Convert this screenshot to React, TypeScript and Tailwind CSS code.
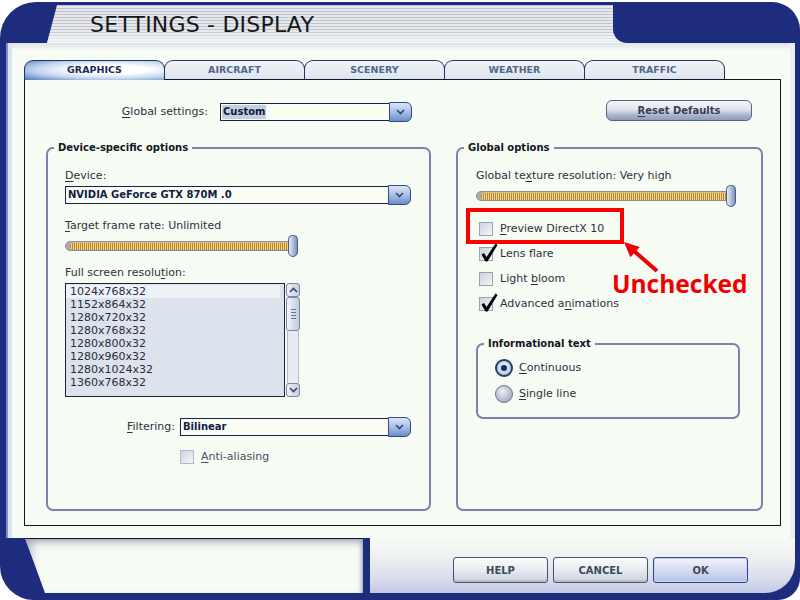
import React from "react";

const REG = "font-['DejaVu_Sans',Verdana,sans-serif]";
const BOLD = "font-['DejaVu_Sans',Verdana,sans-serif] font-bold";

function U({ children }: { children: React.ReactNode }) {
  return <span className="underline underline-offset-[2px] decoration-[1px]">{children}</span>;
}

function Chevron({ down = true }: { down?: boolean }) {
  return (
    <svg width="9" height="6" viewBox="0 0 9 6">
      <path d={down ? "M1 1L4.5 4.5L8 1" : "M1 5L4.5 1.5L8 5"} fill="none" stroke="#2f467c" strokeWidth="1.6" />
    </svg>
  );
}

function Select({ value, className, highlight }: { value: string; className: string; highlight?: boolean }) {
  return (
    <div className={`flex h-[18px] ${className}`}>
      <div className="flex-1 flex items-center border border-[#16224a] bg-[#fbfdf2] pl-[1px] overflow-hidden">
        <span className={`${BOLD} text-[10px] leading-[14px] text-[#0e1c48] px-[1px] ${highlight ? "bg-[#c5cfdd]" : ""}`}>{value}</span>
      </div>
      <div className="w-[23px] h-[20px] -mt-[1px] -ml-[1px] shrink-0 rounded-r-[6px] border border-[#34488a] bg-[linear-gradient(180deg,#dbe6f6_0%,#a8bfe6_50%,#6d8dca_100%)] flex items-center justify-center">
        <Chevron />
      </div>
    </div>
  );
}

function Slider({ className }: { className: string }) {
  return (
    <div className={`flex items-center h-[22px] ${className}`}>
      <div className="flex-1 h-[10px] rounded-l-full border border-[#8c8c92] bg-[repeating-linear-gradient(90deg,#b8852a_0px,#b8852a_1px,#f0d68e_1px,#f0d68e_2px)] shadow-[inset_4px_0_0_#a9aeb8,inset_0_1px_0_#d8c080]" />
      <div className="w-[10px] h-[22px] -ml-[2px] shrink-0 rounded-t-[5px] rounded-b-[6px] border border-[#4c5c84] bg-[linear-gradient(90deg,#e4ecf6,#a8b8d4_60%,#7c8eb4)]" />
    </div>
  );
}

function Check({ checked, dim }: { checked?: boolean; dim?: boolean }) {
  return (
    <span
      className={`relative inline-block w-[14px] h-[14px] shrink-0 border ${
        dim ? "border-[#b4bac6]" : "border-[#9aa3b5]"
      } bg-[linear-gradient(135deg,#cdd3de,#f3f5f8)]`}
    >
      {checked && (
        <svg className="absolute left-[0px] top-[-6px]" width="18" height="21" viewBox="0 0 18 21">
          <polygon points="1.5,12.5 4,11 6.5,15 15.5,1.5 17.5,3 7.5,19.5 5.5,19.5" fill="#000" />
        </svg>
      )}
    </span>
  );
}

function CheckRow({ checked, children }: { checked?: boolean; children: React.ReactNode }) {
  return (
    <div className="flex items-center h-[16px] gap-[7px]">
      <Check checked={checked} />
      <span className={`${REG} text-[11px] leading-[14px] text-[#30303c]`}>{children}</span>
    </div>
  );
}

function Radio({ on, children }: { on?: boolean; children: React.ReactNode }) {
  return (
    <div className="flex items-center h-[18px] gap-[6px]">
      {on ? (
        <span className="w-[18px] h-[18px] rounded-full border-2 border-[#2a3a66] bg-[radial-gradient(circle_at_50%_40%,#eef4fb,#9cc0e4)] flex items-center justify-center">
          <span className="w-[6px] h-[6px] rounded-full bg-[#1a2a50]" />
        </span>
      ) : (
        <span className="w-[18px] h-[18px] rounded-full border border-[#6c7890] bg-[radial-gradient(circle_at_40%_35%,#eef1f6,#8a98b4)]" />
      )}
      <span className={`${REG} text-[11px] leading-[14px] text-[#30303c]`}>{children}</span>
    </div>
  );
}

function Label({ children, className = "" }: { children: React.ReactNode; className?: string }) {
  return <div className={`${REG} text-[11px] leading-[14px] h-[14px] text-[#30303c] ${className}`}>{children}</div>;
}

function Legend({ children }: { children: React.ReactNode }) {
  return <legend className={`${BOLD} ml-[6px] px-[4px] text-[10px] leading-[14px] text-[#14161e]`}>{children}</legend>;
}

function Tab({ label, active }: { label: string; active?: boolean }) {
  return active ? (
    <div className={`w-[141px] h-[20px] rounded-t-[9px] border border-b-0 border-[#243458] bg-[radial-gradient(ellipse_at_62%_45%,#ffffff_30%,#c4d6ee_62%,#4a78c0_100%)] flex items-center justify-center ${BOLD} text-[9.5px] text-[#1c2a52]`}>
      {label}
    </div>
  ) : (
    <div className={`w-[141px] h-[19px] -ml-[1px] rounded-t-[9px] border border-b-0 border-[#243458] bg-[linear-gradient(180deg,#f2f5f8,#dce4ee)] flex items-center justify-center ${BOLD} text-[9.5px] text-[#50688a]`}>
      {label}
    </div>
  );
}

function Scrollbar() {
  return (
    <div className="w-[14px] h-[114px] ml-[1px] flex flex-col">
      <div className="h-[14px] rounded-[3px] border border-[#7a88a8] bg-[linear-gradient(90deg,#eef2f8,#c4cedf)] flex items-center justify-center">
        <Chevron down={false} />
      </div>
      <div className="h-[34px] rounded-[3px] border border-[#7a88a8] bg-[linear-gradient(90deg,#f2f5fa,#c0cadc)] flex flex-col items-center justify-center gap-[2px]">
        <div className="w-[5px] h-[1px] bg-[#6a7894]" />
        <div className="w-[5px] h-[1px] bg-[#6a7894]" />
        <div className="w-[5px] h-[1px] bg-[#6a7894]" />
        <div className="w-[5px] h-[1px] bg-[#6a7894]" />
      </div>
      <div className="flex-1 mx-[1px] border-x border-[#b4bccc] bg-[#e8ecf2]" />
      <div className="h-[14px] rounded-[3px] border border-[#7a88a8] bg-[linear-gradient(90deg,#eef2f8,#c4cedf)] flex items-center justify-center">
        <Chevron />
      </div>
    </div>
  );
}

function BottomButton({ label, primary }: { label: string; primary?: boolean }) {
  return (
    <div
      className={`w-[95px] h-[26px] rounded-[3px] border flex items-center justify-center ${BOLD} text-[10px] text-[#3c4a5c] ${
        primary
          ? "border-[#33438c] bg-[linear-gradient(180deg,#f2f5fc,#d6ddf2_50%,#b4c0e6)] shadow-[inset_0_0_0_1px_#c8d2f0]"
          : "border-[#4a5468] bg-[linear-gradient(180deg,#fbfcfc,#e8ecf0_50%,#c8d0dc)] shadow-[inset_0_-2px_0_#b8c0cc]"
      }`}
    >
      {label}
    </div>
  );
}

const RES = [
  "1024x768x32",
  "1152x864x32",
  "1280x720x32",
  "1280x768x32",
  "1280x800x32",
  "1280x960x32",
  "1280x1024x32",
  "1360x768x32",
];

export default function App() {
  return (
    <div className="relative w-[800px] h-[600px] bg-white overflow-hidden">
      <div className="mt-[2px] w-[800px] h-[598px] bg-[#1e2c7e] rounded-tl-[36px] rounded-tr-[28px] rounded-bl-[34px] rounded-br-[22px] flex flex-col overflow-hidden">
        {/* Title bar */}
        <div className="flex h-[41px] pt-[3px] shrink-0">
          <div className="w-[47px] shrink-0" />
          <div className="flex-1 mr-[5px] flex [clip-path:polygon(10px_0,100%_0,100%_100%,0_100%)] bg-[linear-gradient(180deg,rgba(255,255,255,0)_65%,rgba(255,255,255,0.75)_100%),repeating-linear-gradient(180deg,#bfc3cc_0px,#bfc3cc_1px,#e6e8ec_1px,#e6e8ec_3px)]">
            <div className={`flex-1 flex items-center pl-[43px] ${REG} text-[22px] text-[#15161c] tracking-[0.2px]`}>
              SETTINGS - DISPLAY
            </div>
            <div className="w-[182px] h-full bg-[#1e2c7e] rounded-bl-[14px]" />
          </div>
        </div>

        {/* Content region */}
        <div className="h-[495px] shrink-0 ml-[6px] mr-[5px] flex flex-col bg-[linear-gradient(180deg,#dde2ea_0px,#f6fbf4_7px)] shadow-[inset_2px_0_0_#7d8fca,inset_6px_0_0_#dbe3f0,inset_-5px_0_0_#eceff0]">
          {/* Tabs */}
          <div className="flex items-start h-[20px] -mb-[1px] mt-[17px] ml-[18px] relative z-10">
            <Tab label="GRAPHICS" active />
            <Tab label="AIRCRAFT" />
            <Tab label="SCENERY" />
            <Tab label="WEATHER" />
            <Tab label="TRAFFIC" />
          </div>

          {/* Panel */}
          <div className="ml-[18px] mr-[14px] h-[447px] border border-[#0f1522] bg-[#f6fbf4] flex flex-col">
            {/* Row 1 */}
            <div className="flex items-start h-[22px] mt-[20px]">
              <Label className="ml-[95px] w-[100px] mt-[5px] text-right pr-[12px]">
                <U>G</U>lobal settings:
              </Label>
              <Select className="w-[192px] mt-[3px]" value="Custom" highlight />
              <div
                className={`ml-auto mr-[28px] w-[146px] h-[21px] rounded-[6px] border border-[#56648a] bg-[linear-gradient(180deg,#f4f6fa_0%,#dfe4ee_45%,#a8b4cc_75%,#8e9cbc_100%)] flex items-center justify-center ${BOLD} text-[10px] text-[#3a3e4e]`}
              >
                <span>
                  <U>R</U>eset Defaults
                </span>
              </div>
            </div>

            {/* Groups */}
            <div className="flex mt-[19px] ml-[21px]">
              {/* Device-specific */}
              <fieldset className="w-[385px] h-[370px] border-2 border-[#7c83ab] rounded-[7px] p-0 m-0">
                <Legend>Device-specific options</Legend>
                <div className="pl-[17px] flex flex-col">
                  <Label className="mt-[14px]">
                    <U>D</U>evice:
                  </Label>
                  <Select className="w-[346px] mt-[3px]" value="NVIDIA GeForce GTX 870M .0" />
                  <Label className="mt-[15px]">
                    <U>T</U>arget frame rate: Unlimited
                  </Label>
                  <Slider className="w-[233px] mt-[2px]" />
                  <Label className="mt-[9px]">
                    Full screen resolu<U>t</U>ion:
                  </Label>
                  <div className="flex mt-[3px] h-[114px]">
                    <div className="w-[220px] h-[114px] border border-[#1a2438] bg-[#dce3ec] pt-[1px] overflow-hidden">
                      {RES.map((r, i) => (
                        <div
                          key={r}
                          className={`h-[13px] leading-[13px] pl-[4px] mr-[4px] ${REG} text-[11px] text-[#2a2c38] ${
                            i === 0 ? "bg-[#eef2f7]" : ""
                          }`}
                        >
                          {r}
                        </div>
                      ))}
                    </div>
                    <Scrollbar />
                  </div>
                  <div className="flex items-center h-[18px] mt-[21px]">
                    <Label className="w-[115px] text-right pr-[5px]">
                      <U>F</U>iltering:
                    </Label>
                    <Select className="w-[231px]" value="Bilinear" />
                  </div>
                  <div className="flex items-center h-[14px] mt-[14px] ml-[115px] gap-[7px]">
                    <Check dim />
                    <span className={`${REG} text-[11px] leading-[14px] text-[#4a4e5e]`}>
                      <U>A</U>nti-aliasing
                    </span>
                  </div>
                </div>
              </fieldset>

              {/* Global options */}
              <fieldset className="ml-[25px] w-[307px] h-[370px] border-2 border-[#7c83ab] rounded-[7px] p-0 m-0">
                <Legend>Global options</Legend>
                <div className="pl-[18px] flex flex-col">
                  <Label className="mt-[14px]">
                    Global te<U>x</U>ture resolution: Very high
                  </Label>
                  <Slider className="w-[260px] mt-[2px]" />
                  <div className="mt-[1px] -ml-[10px] w-[158px] h-[36px] border-[4px] border-[#ff0000] flex items-center pt-[6px] pl-[9px]">
                    <CheckRow>
                      <U>P</U>review DirectX 10
                    </CheckRow>
                  </div>
                  <div className="mt-[2px] ml-[3px]">
                    <CheckRow checked>
                      Lens f<U>l</U>are
                    </CheckRow>
                  </div>
                  <div className="mt-[9px] ml-[3px]">
                    <CheckRow>
                      Light <U>b</U>loom
                    </CheckRow>
                  </div>
                  <div className="mt-[9px] ml-[3px]">
                    <CheckRow checked>
                      Advanced a<U>n</U>imations
                    </CheckRow>
                  </div>
                  <fieldset className="mt-[25px] w-[264px] h-[82px] border-2 border-[#7c83ab] rounded-[7px] p-0 m-0">
                    <Legend>Informational text</Legend>
                    <div className="pl-[17px] flex flex-col">
                      <div className="mt-[8px]">
                        <Radio on>
                          <U>C</U>ontinuous
                        </Radio>
                      </div>
                      <div className="mt-[8px]">
                        <Radio>
                          <U>S</U>ingle line
                        </Radio>
                      </div>
                    </div>
                  </fieldset>
                </div>
              </fieldset>
            </div>
          </div>
        </div>

        {/* Bottom bar */}
        <div className="flex h-[55px] shrink-0">
          <div className="w-[25px] shrink-0" />
          <div className="w-[338px] shrink-0 border-t border-[#101830] bg-[#f7fbf5] [clip-path:polygon(0_0,100%_0,100%_100%,20px_100%)] shadow-[inset_0_7px_8px_-5px_#8f96a8,inset_-4px_0_5px_-3px_#8f96a8,inset_14px_0_10px_-8px_#b0b6c4]" />
          <div className="w-[7px] shrink-0" />
          <div className="flex-1 mr-[5px] rounded-br-[30px] bg-[linear-gradient(180deg,#f6fbf4_0%,#eef0f2_35%,#d8dcec_75%,#c2c8e4_100%)] flex justify-end items-start pt-[19px] pr-[47px] gap-[5px]">
            <BottomButton label="HELP" />
            <BottomButton label="CANCEL" />
            <BottomButton label="OK" primary />
          </div>
        </div>
      </div>

      {/* Annotation overlay */}
      <svg className="absolute left-[615px] top-[232px]" width="50" height="45" viewBox="0 0 50 45">
        <path d="M19 19L42 39" stroke="#f00000" strokeWidth="4" />
        <polygon points="9,10 15.4,25.3 24.8,14.9" fill="#f00000" />
      </svg>
      <div className="absolute left-[612px] top-[272px] font-['Open_Sans',sans-serif] font-bold text-[24.5px] leading-[24px] text-[#ee0000]">
        Unchecked
      </div>
    </div>
  );
}
